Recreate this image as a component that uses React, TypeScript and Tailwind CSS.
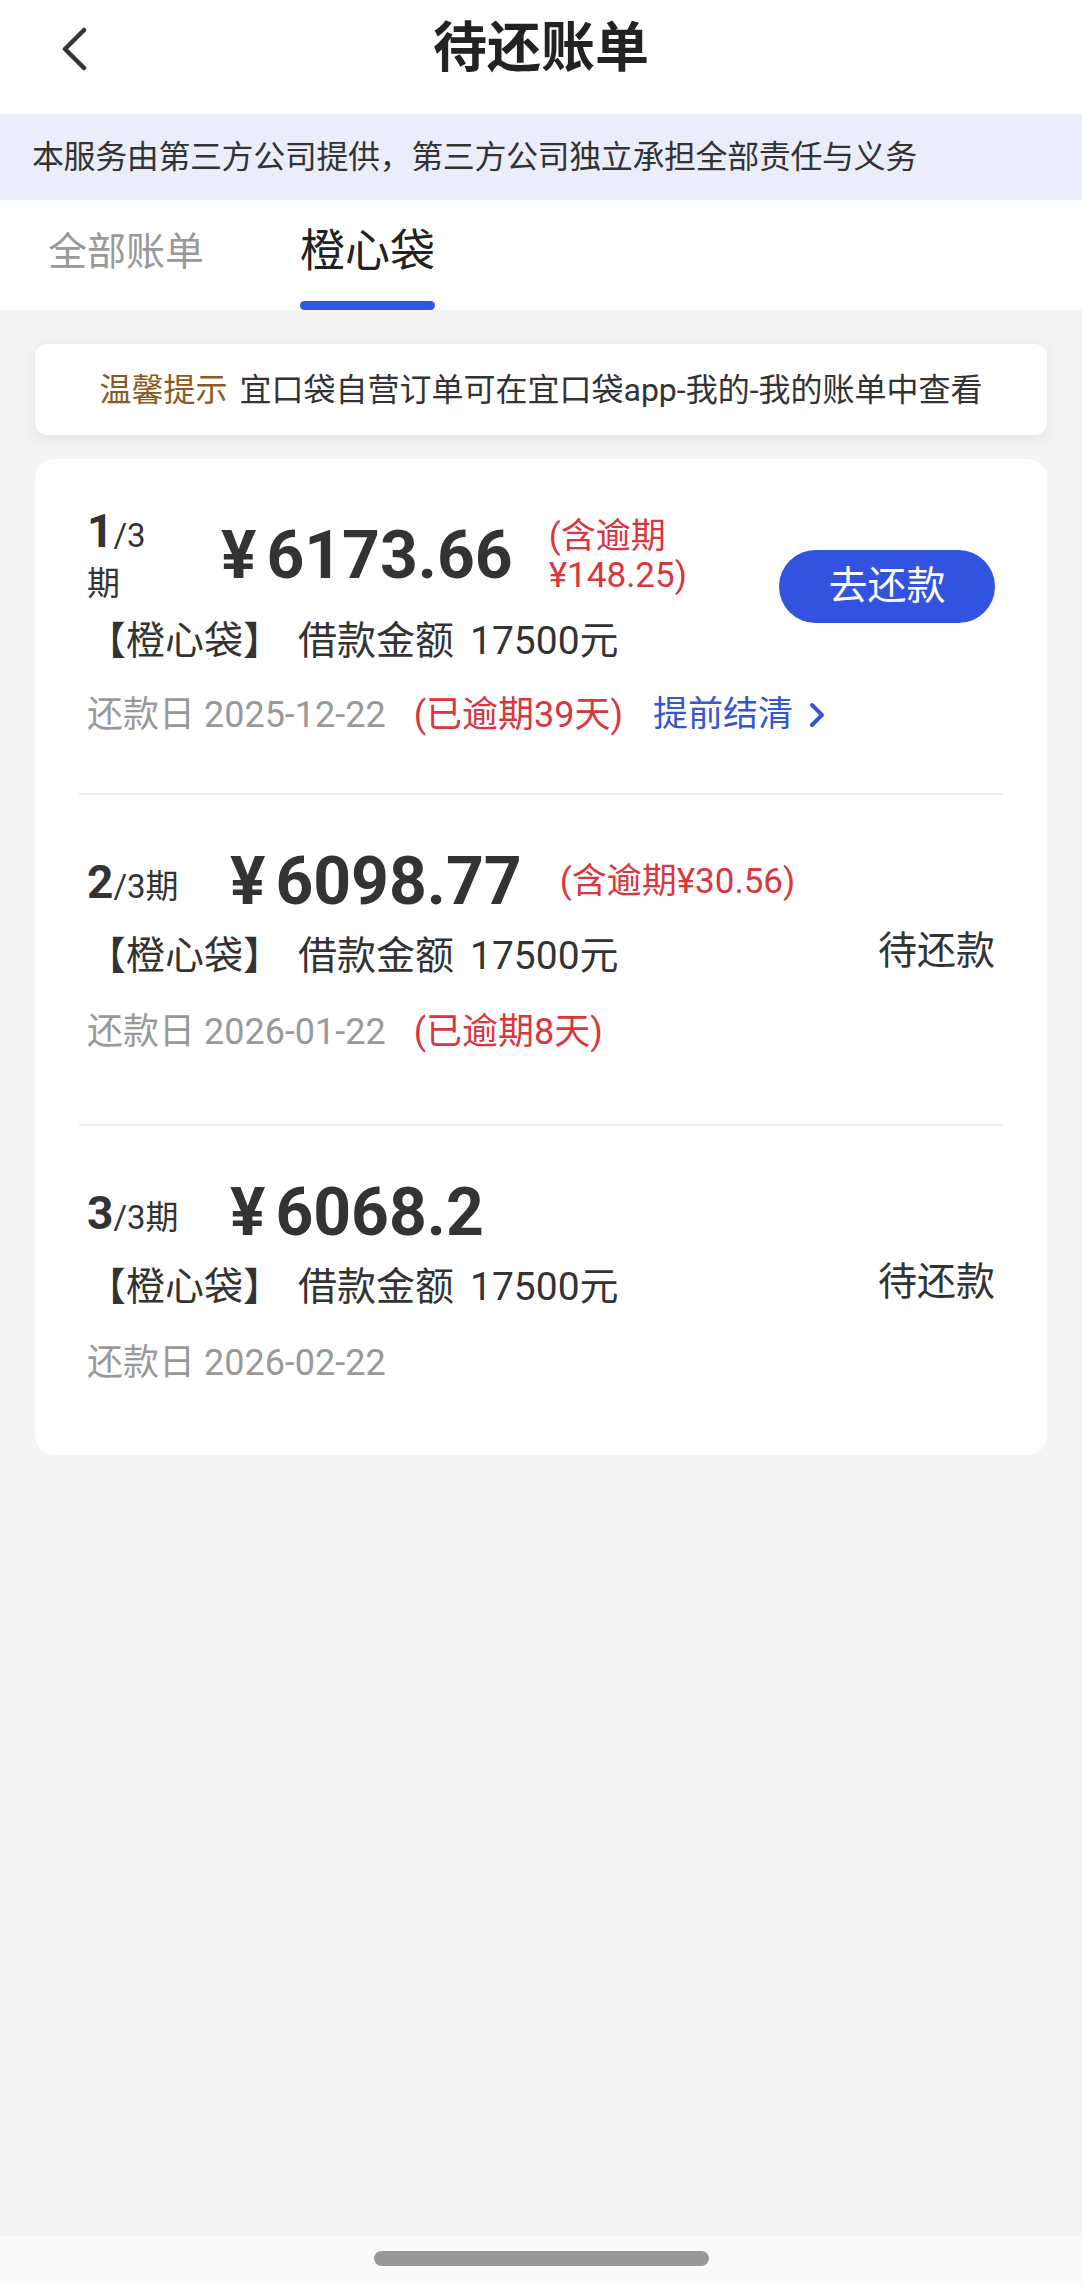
import React from "react";

function BackIcon() {
  return (
    <svg width="28" height="44" viewBox="0 0 28 44" fill="none">
      <path d="M24 3 L5 22 L24 41" stroke="#333333" strokeWidth="4.5" strokeLinecap="round" strokeLinejoin="round" />
    </svg>
  );
}

function SmallChevron() {
  return (
    <svg width="20" height="26" viewBox="0 0 20 26" fill="none">
      <path d="M5 3 L15 13 L5 23" stroke="#3355d6" strokeWidth="4" strokeLinecap="round" strokeLinejoin="round" />
    </svg>
  );
}

function Amount({ value }: { value: string }) {
  return (
    <div className="shrink-0 text-[66px] font-bold leading-[72px] text-[#333333] whitespace-nowrap">
      <span className="mr-[10px]">¥</span>
      {value}
    </div>
  );
}

function LoanRow({ mt }: { mt: string }) {
  return (
    <div className={`${mt} flex h-[50px] items-center text-[39px] leading-[50px] text-[#333333] whitespace-nowrap`}>
      <span>【橙心袋】</span>
      <span className="ml-[16px]">借款金额</span>
      <span className="ml-[16px]">17500元</span>
    </div>
  );
}

export default function App() {
  return (
    <div className="flex min-h-[2284px] w-[1082px] flex-col bg-[#f4f4f4] font-['Roboto','Noto_Sans_CJK_SC',sans-serif]">
      {/* Header */}
      <div className="h-[114px] bg-white">
        <div className="flex h-[98px] items-center">
          <div className="flex w-[150px] items-center pl-[60px]">
            <BackIcon />
          </div>
          <div className="flex-1 text-center text-[54px] font-bold leading-[60px] text-[#222222]">待还账单</div>
          <div className="w-[150px]" />
        </div>
      </div>

      {/* Notice banner */}
      <div className="flex h-[86px] items-center bg-[#ebedfa] pl-[32px] text-[32px] tracking-[-0.4px] text-[#333333] whitespace-nowrap">
        本服务由第三方公司提供，第三方公司独立承担全部责任与义务
      </div>

      {/* Tabs */}
      <div className="flex h-[110px] items-end gap-[96px] bg-white pl-[48px]">
        <div className="flex flex-col items-center">
          <div className="text-[39px] leading-[50px] text-[#999999]">全部账单</div>
          <div className="mt-[24px] h-[9px] w-full rounded-full bg-transparent" />
        </div>
        <div className="flex flex-col items-center">
          <div className="text-[45px] leading-[50px] text-[#222222]">橙心袋</div>
          <div className="mt-[24px] h-[9px] w-full rounded-full bg-[#3355e0]" />
        </div>
      </div>

      {/* Content */}
      <div className="flex-1 px-[35px] pt-[34px]">
        <div className="flex h-[91px] items-center justify-center rounded-[12px] bg-white text-[32px] shadow-[0_4px_16px_rgba(0,0,0,0.07)] whitespace-nowrap">
          <span className="text-[#8b5a24]">温馨提示</span>
          <span className="ml-[12px] text-[#333333]">宜口袋自营订单可在宜口袋app-我的-我的账单中查看</span>
        </div>

        <div className="mt-[24px] rounded-[20px] bg-white px-[44px]">
          {/* Item 1 */}
          <div className="flex flex-col border-b-2 border-[#eeeeee] px-[8px] pt-[55px] pb-[53px]">
            <div className="flex items-start justify-between">
              <div className="flex flex-col">
                <div className="flex h-[84px] items-center">
                  <div className="w-[134px] shrink-0">
                    <div className="leading-[44px] text-[#333333]">
                      <span className="text-[46px] font-bold">1</span>
                      <span className="text-[33px]">/3</span>
                    </div>
                    <div className="text-[33px] leading-[40px] text-[#333333]">期</div>
                  </div>
                  <Amount value="6173.66" />
                  <div className="ml-[36px] text-[35px] leading-[39px] text-[#d9363e] whitespace-nowrap">
                    (含逾期
                    <br />
                    ¥148.25)
                  </div>
                </div>
                <LoanRow mt="mt-[18px]" />
              </div>
              <button className="mt-[36px] flex h-[73px] w-[216px] shrink-0 items-center justify-center rounded-full bg-[#3252e0] text-[39px] text-white">
                去还款
              </button>
            </div>
            <div className="mt-[24px] flex h-[50px] items-center text-[36px] leading-[50px] whitespace-nowrap">
              <span className="text-[#999999]">还款日 2025-12-22</span>
              <span className="ml-[28px] text-[#d9363e]">(已逾期39天)</span>
              <span className="ml-[30px] text-[35px] text-[#3355d6]">提前结清</span>
              <span className="ml-[14px] flex items-center">
                <SmallChevron />
              </span>
            </div>
          </div>

          {/* Item 2 */}
          <div className="flex items-start justify-between border-b-2 border-[#eeeeee] px-[8px] pt-[51px] pb-[67px]">
            <div className="flex shrink-0 flex-col">
              <div className="flex h-[72px] items-center">
                <div className="w-[143px] shrink-0 whitespace-nowrap leading-none text-[#333333]">
                  <span className="text-[46px] font-bold">2</span>
                  <span className="text-[33px]">/3期</span>
                </div>
                <Amount value="6098.77" />
                <div className="ml-[38px] text-[35px] leading-[40px] text-[#d9363e] whitespace-nowrap">(含逾期¥30.56)</div>
              </div>
              <LoanRow mt="mt-[13px]" />
              <div className="mt-[26px] flex h-[50px] items-center text-[36px] leading-[50px] whitespace-nowrap">
                <span className="text-[#999999]">还款日 2026-01-22</span>
                <span className="ml-[28px] text-[#d9363e]">(已逾期8天)</span>
              </div>
            </div>
            <div className="mt-[80px] shrink-0 text-[39px] leading-[50px] text-[#333333]">待还款</div>
          </div>

          {/* Item 3 */}
          <div className="flex items-start justify-between px-[8px] pt-[51px] pb-[67px]">
            <div className="flex shrink-0 flex-col">
              <div className="flex h-[72px] items-center">
                <div className="w-[143px] shrink-0 whitespace-nowrap leading-none text-[#333333]">
                  <span className="text-[46px] font-bold">3</span>
                  <span className="text-[33px]">/3期</span>
                </div>
                <Amount value="6068.2" />
              </div>
              <LoanRow mt="mt-[13px]" />
              <div className="mt-[26px] flex h-[50px] items-center text-[36px] leading-[50px] whitespace-nowrap">
                <span className="text-[#999999]">还款日 2026-02-22</span>
              </div>
            </div>
            <div className="mt-[80px] shrink-0 text-[39px] leading-[50px] text-[#333333]">待还款</div>
          </div>
        </div>
      </div>

      {/* Bottom gesture bar */}
      <div className="flex h-[48px] items-start justify-center bg-[#fafafa] pt-[15px]">
        <div className="h-[15px] w-[335px] rounded-full bg-[#999999]" />
      </div>
    </div>
  );
}
